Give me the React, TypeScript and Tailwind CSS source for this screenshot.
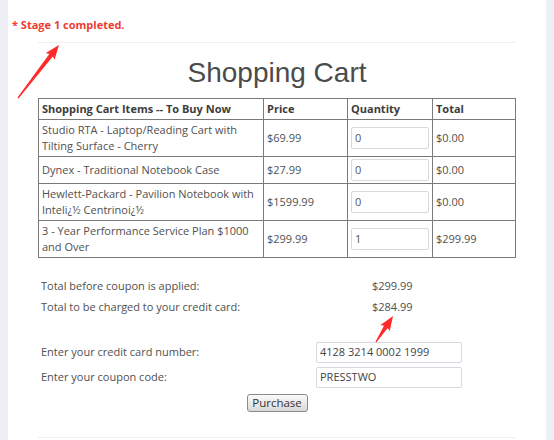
type Item = { name: string; price: string; qty: string; total: string };

const items: Item[] = [
  { name: "Studio RTA - Laptop/Reading Cart with Tilting Surface - Cherry", price: "$69.99", qty: "0", total: "$0.00" },
  { name: "Dynex - Traditional Notebook Case", price: "$27.99", qty: "0", total: "$0.00" },
  { name: "Hewlett-Packard - Pavilion Notebook with Inteli¿½ Centrinoi¿½", price: "$1599.99", qty: "0", total: "$0.00" },
  { name: "3 - Year Performance Service Plan $1000 and Over", price: "$299.99", qty: "1", total: "$299.99" },
];

// tapered arrow polygon from tail to head
function arrowPoints(tx: number, ty: number, hx: number, hy: number) {
  const dx = hx - tx;
  const dy = hy - ty;
  const len = Math.hypot(dx, dy);
  const ux = dx / len;
  const uy = dy / len;
  const nx = -uy;
  const ny = ux;
  const headLen = 13;
  const bx = hx - ux * headLen;
  const by = hy - uy * headLen;
  const p = (x: number, y: number) => `${x.toFixed(1)},${y.toFixed(1)}`;
  return [
    p(tx + nx * 0.6, ty + ny * 0.6),
    p(bx + nx * 2.2, by + ny * 2.2),
    p(bx + nx * 5.5 - ux * 1.5, by + ny * 5.5 - uy * 1.5),
    p(hx, hy),
    p(bx - nx * 5.5 - ux * 1.5, by - ny * 5.5 - uy * 1.5),
    p(bx - nx * 2.2, by - ny * 2.2),
    p(tx - nx * 0.6, ty - ny * 0.6),
  ].join(" ");
}

export default function App() {
  return (
    <div className="relative flex h-[440px] w-[554px] overflow-hidden bg-white font-['Open_Sans',sans-serif] text-[11px] text-[#505050]">
      {/* left strip */}
      <div className="w-[8px] shrink-0 bg-[#eeeff5]" />

      {/* main */}
      <div className="flex-1">
        <div className="mt-[17px] pl-[4px] text-[11px] font-bold leading-[16px] text-[#ee3b33]">* Stage 1 completed.</div>

        <div className="mx-[30px]">
          <hr className="mt-[9px] border-t border-[#eeeeee]" />

          <h1 className="mt-[13px] text-center font-['Liberation_Sans',Arial,sans-serif] text-[28px] leading-[33px] text-[#4b4b4b]">
            Shopping Cart
          </h1>

          <table className="mt-[9px] w-full table-fixed border-collapse border border-[#7a7a7a] leading-[16px]">
            <colgroup>
              <col className="w-[225px]" />
              <col className="w-[84px]" />
              <col className="w-[85px]" />
              <col />
            </colgroup>
            <thead>
              <tr className="font-bold text-[#3c3c3c]">
                <td className="border border-[#7a7a7a] px-[3px] py-[2px]">Shopping Cart Items -- To Buy Now</td>
                <td className="border border-[#7a7a7a] px-[3px] py-[2px]">Price</td>
                <td className="border border-[#7a7a7a] px-[3px] py-[2px]">Quantity</td>
                <td className="border border-[#7a7a7a] px-[3px] py-[2px]">Total</td>
              </tr>
            </thead>
            <tbody>
              {items.map((it) => (
                <tr key={it.name}>
                  <td className="border border-[#7a7a7a] px-[3px] py-[2px]">{it.name}</td>
                  <td className="border border-[#7a7a7a] px-[3px] py-[2px]">{it.price}</td>
                  <td className="border border-[#7a7a7a] px-[3px] py-[2px]">
                    <div className="flex h-[22px] items-center rounded-[2px] border border-[#d6d9df] px-[3px] text-[#555]">
                      {it.qty}
                    </div>
                  </td>
                  <td className="border border-[#7a7a7a] px-[3px] py-[2px]">{it.total}</td>
                </tr>
              ))}
            </tbody>
          </table>

          {/* totals */}
          <div className="mt-[17px] grid grid-cols-[334px_1fr] leading-[21px]">
            <div className="pl-[3px]">Total before coupon is applied:</div>
            <div>$299.99</div>
            <div className="pl-[3px]">Total to be charged to your credit card:</div>
            <div>$284.99</div>
          </div>

          {/* payment */}
          <div className="mt-[25px] grid grid-cols-[278px_146px] gap-y-[4px]">
            <div className="flex h-[21px] items-center pl-[3px]">Enter your credit card number:</div>
            <div className="flex h-[21px] items-center rounded-[2px] border border-[#d6d9df] px-[3px] text-[#444]">
              4128 3214 0002 1999
            </div>
            <div className="flex h-[21px] items-center pl-[3px]">Enter your coupon code:</div>
            <div className="flex h-[21px] items-center rounded-[2px] border border-[#d6d9df] px-[3px] text-[#444]">
              PRESSTWO
            </div>
          </div>

          <div className="mt-[6px] flex justify-center">
            <button className="h-[18px] w-[61px] rounded-[3px] border border-[#8a8a8a] bg-gradient-to-b from-[#fafafa] to-[#d9d9d9] text-[11.5px] leading-[16px] text-[#333]">
              Purchase
            </button>
          </div>

          <hr className="mt-[25px] border-t border-[#eeeeee]" />
        </div>
      </div>

      {/* right strip */}
      <div className="w-[8px] shrink-0 bg-[#eeeff5]" />

      {/* annotation arrows */}
      <svg className="pointer-events-none absolute left-0 top-0" width="554" height="440">
        <polygon points={arrowPoints(18, 98, 59, 45)} fill="#ff2a2a" />
        <polygon points={arrowPoints(376, 342, 393, 316)} fill="#ff2a2a" />
      </svg>
    </div>
  );
}
